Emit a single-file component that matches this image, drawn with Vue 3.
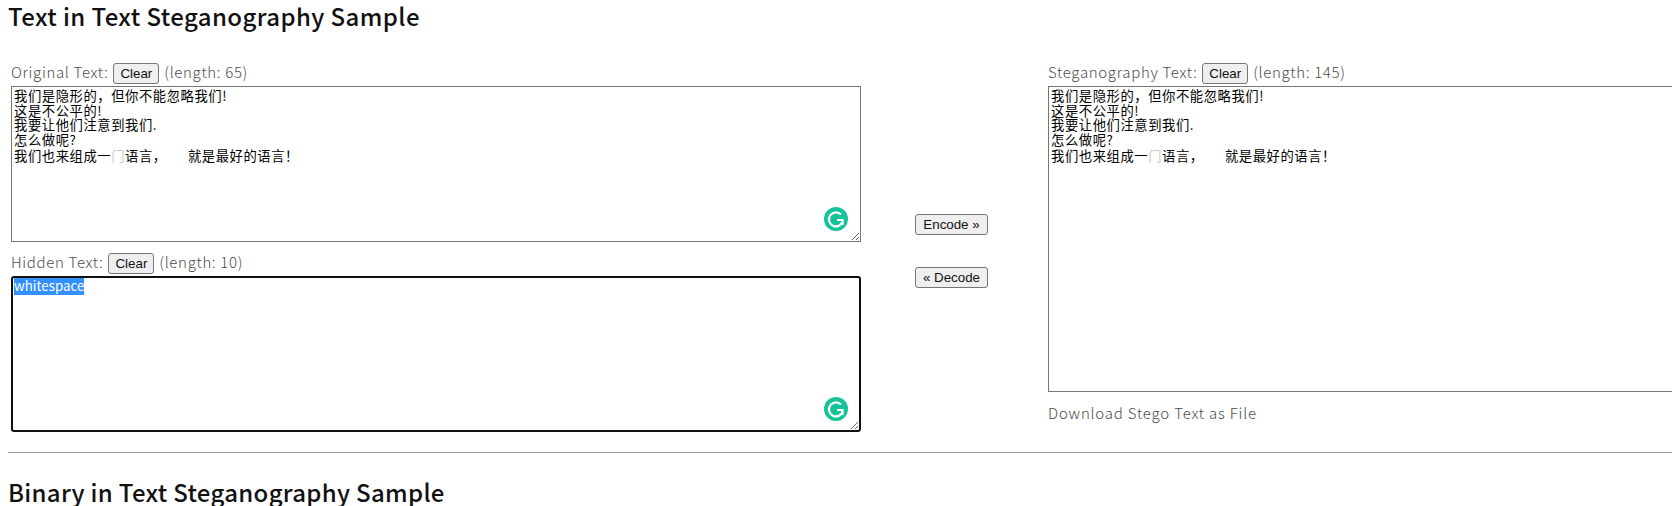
<template>
  <div class="page">
    <h2 class="title">Text in Text Steganography Sample</h2>
    <div class="sample">
      <div class="left-col">
        <div class="label-row">
          <span class="label-text">Original Text:</span>
          <button class="btn clear">Clear</button>
          <span class="label-text">(length: 65)</span>
        </div>
        <div class="box-wrap">
          <div class="textbox small">
            <div v-for="line in lines" :key="line" class="cjk-line">{{ line }}</div>
            <div class="cjk-line last-line">我们也来组成一<span class="faint">门</span>{{ lastLine }}</div>
          </div>
          <svg class="g-icon" viewBox="0 0 24 24">
            <circle cx="12" cy="12" r="12" fill="#15c39a" />
            <path d="M17 7.6A7 7 0 1 0 18.6 14.5" fill="none" stroke="#fff" stroke-width="2.2" />
            <path d="M13 13H18.6V18" fill="none" stroke="#fff" stroke-width="2" />
          </svg>
        </div>
        <div class="label-row second">
          <span class="label-text">Hidden Text:</span>
          <button class="btn clear">Clear</button>
          <span class="label-text">(length: 10)</span>
        </div>
        <div class="box-wrap">
          <div class="textbox small focused"><span class="selected">whitespace</span></div>
          <svg class="g-icon" viewBox="0 0 24 24">
            <circle cx="12" cy="12" r="12" fill="#15c39a" />
            <path d="M17 7.6A7 7 0 1 0 18.6 14.5" fill="none" stroke="#fff" stroke-width="2.2" />
            <path d="M13 13H18.6V18" fill="none" stroke="#fff" stroke-width="2" />
          </svg>
        </div>
      </div>
      <div class="mid-col">
        <button class="btn wide">Encode »</button>
        <button class="btn wide">« Decode</button>
      </div>
      <div class="right-col">
        <div class="label-row">
          <span class="label-text">Steganography Text:</span>
          <button class="btn clear">Clear</button>
          <span class="label-text">(length: 145)</span>
        </div>
        <div class="textbox large">
          <div v-for="line in lines" :key="line" class="cjk-line">{{ line }}</div>
          <div class="cjk-line last-line">我们也来组成一<span class="faint">门</span>{{ lastLine }}</div>
        </div>
        <div class="download">Download Stego Text as File</div>
      </div>
    </div>
    <hr class="divider" />
    <h2 class="title bottom">Binary in Text Steganography Sample</h2>
  </div>
</template>

<script setup>
const lines = [
  '我们是隐形的，但你不能忽略我们!',
  '这是不公平的!',
  '我要让他们注意到我们.',
  '怎么做呢?'
]
const lastLine = '语言，\u00a0\u00a0\u00a0\u00a0\u00a0\u00a0就是最好的语言！'
</script>

<style>
html, body {
  overflow: hidden;
  background: #fff;
}
</style>

<style scoped>
.page {
  width: 1664px;
  height: 506px;
  padding-left: 8px;
  overflow: hidden;
  font-family: "Noto Sans CJK JP", "Noto Sans", sans-serif;
}

.title {
  margin: 4px 0 0;
  font-size: 24px;
  line-height: 24px;
  letter-spacing: 0.4px;
  font-weight: 500;
  color: #111;
}

.title.bottom {
  margin-top: 27px;
  letter-spacing: 0.3px;
}

.sample {
  display: flex;
  margin-top: 35px;
  padding-left: 3px;
}

.left-col {
  width: 850px;
  flex: none;
}

.mid-col {
  width: 181px;
  flex: none;
  margin-right: 6px;
  display: flex;
  flex-direction: column;
  align-items: center;
  gap: 32px;
  padding-top: 151px;
}

.right-col {
  width: 900px;
  flex: none;
}

.label-row {
  display: flex;
  align-items: center;
  gap: 5px;
  height: 21px;
  margin-bottom: 2px;
  white-space: nowrap;
}

.label-row.second {
  margin-top: 11px;
}

.label-text {
  padding-bottom: 4px;
  font-size: 15px;
  line-height: 17px;
  letter-spacing: 0.66px;
  font-weight: 300;
  color: #4d4d4d;
}

.btn {
  font-family: "Liberation Sans", Arial, sans-serif;
  font-size: 13.33px;
  line-height: 15px;
  height: 21px;
  padding: 1px 6px;
  background: #efefef;
  color: #111;
  border: 1px solid #767676;
  border-radius: 3px;
}

.btn.wide {
  width: 73px;
  padding: 1px 0;
}

.box-wrap {
  position: relative;
}

.textbox {
  box-sizing: border-box;
  width: 850px;
  border: 1px solid #767676;
  padding: 2px;
  background: #fff;
  color: #000;
  font-family: "Noto Sans CJK SC", sans-serif;
  font-size: 13.33px;
  line-height: 14.5px;
  white-space: pre-wrap;
  overflow: auto;
}

.textbox.small {
  height: 156px;
  resize: both;
}

.textbox.large {
  width: 900px;
  height: 306px;
}

.textbox.focused {
  border: 2px solid #101010;
  border-radius: 3px;
  padding: 1px;
}

.cjk-line {
  letter-spacing: 0.55px;
}

.last-line {
  margin-top: 2px;
}

.faint {
  color: #ccc;
}

.selected {
  background: #3390ff;
  color: #fff;
}

.g-icon {
  position: absolute;
  right: 13px;
  bottom: 11px;
  width: 24px;
  height: 24px;
}

.download {
  margin-top: 10px;
  font-size: 15px;
  line-height: 21px;
  letter-spacing: 0.8px;
  font-weight: 300;
  color: #4d4d4d;
}

.divider {
  margin: 20px 0 0;
  border: none;
  border-top: 1px solid #999;
}
</style>
